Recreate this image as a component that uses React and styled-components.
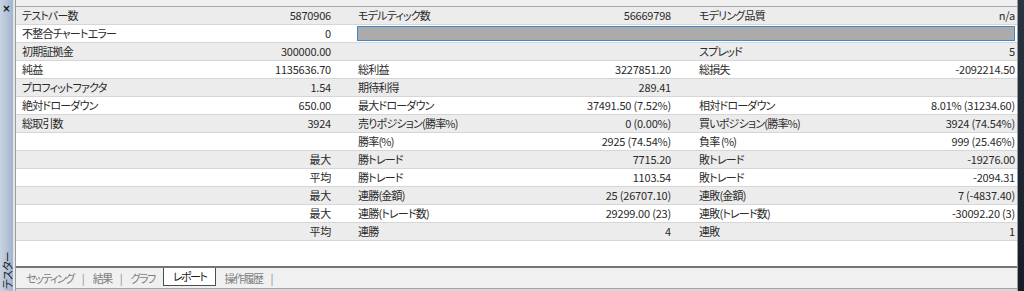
import React from 'react';
import styled, { createGlobalStyle } from 'styled-components';

const GlobalStyle = createGlobalStyle`
  html, body {
    margin: 0;
    padding: 0;
    background: #f0f0f0;
  }
  body {
    width: 1024px;
    height: 291px;
    overflow: hidden;
    font-family: "Noto Sans CJK JP", "Noto Sans", sans-serif;
    font-feature-settings: "palt";
    color: #2a2a2a;
  }
`;

const Window = styled.div`
  display: flex;
  width: 1024px;
  height: 291px;
`;

const SideStrip = styled.div`
  width: 13px;
  box-sizing: border-box;
  padding: 4px 0 2px;
  display: flex;
  flex-direction: column;
  justify-content: space-between;
  align-items: center;
  background: linear-gradient(to right, #c8d3e3, #a2b5cf);
`;

const CloseMark = styled.span`
  font-family: "DejaVu Sans", sans-serif;
  font-size: 10px;
  font-weight: bold;
  line-height: 1;
  color: #111;
`;

const SideTitle = styled.span`
  writing-mode: vertical-rl;
  text-orientation: sideways;
  transform: rotate(180deg);
  font-size: 11px;
  line-height: 12px;
  letter-spacing: -0.8px;
  color: #1e1e1e;
`;

const Gutter = styled.div`
  width: 2px;
  background: #e6e6e6;
`;

const Main = styled.div`
  width: 1001px;
  display: flex;
  flex-direction: column;
  background: #fff;
  border-left: 1px solid #9c9c9c;
  border-right: 1px solid #9c9c9c;
`;

const TopBand = styled.div`
  height: 6px;
  background: #f0f0f0;
  border-bottom: 1px solid #a9a9a9;
`;

const Table = styled.div`
  display: flex;
  flex-direction: column;
`;

const Row = styled.div`
  display: flex;
  height: 17px;
  border-bottom: 1px solid #d6d6d6;
  background: ${p => (p.$shade ? '#ececec' : '#ffffff')};
`;

const Cell = styled.div`
  width: ${p => p.$w}px;
  box-sizing: border-box;
  padding: 0 ${p => p.$pr}px 0 ${p => p.$pl}px;
  display: flex;
  align-items: center;
  justify-content: space-between;
  font-size: 11px;
  line-height: 17px;
  white-space: nowrap;
`;

const Label = styled.span`
  letter-spacing: -0.8px;
`;

const Value = styled.span`
  margin-left: auto;
  letter-spacing: -0.2px;
`;

const ProgressBar = styled.div`
  flex: 1;
  height: 13px;
  margin: 1px 2px 0 22px;
  border: 1px solid #4388c6;
  background: #ababab;
`;

const Spacer = styled.div`
  flex: 1;
  background: #fff;
`;

const TabBar = styled.div`
  height: 20px;
  display: flex;
  align-items: flex-start;
  gap: 8px;
  padding-left: 10px;
  background: #f0f0f0;
  border-top: 2px solid #747474;
  border-bottom: 1px solid #a3a3a3;
  font-size: 11px;
`;

const Tab = styled.span`
  height: ${p => (p.$active ? '17px' : '20px')};
  line-height: ${p => (p.$active ? '17px' : '20px')};
  padding: 0 ${p => (p.$active ? '9px' : '0')};
  letter-spacing: -1.5px;
  color: ${p => (p.$active ? '#1a1a1a' : '#7d7d7d')};
  background: ${p => (p.$active ? '#ffffff' : 'transparent')};
  border: ${p => (p.$active ? '1px solid #4d4d4d' : 'none')};
  border-top: none;
`;

const Sep = styled.span`
  line-height: 20px;
  color: #8a8a8a;
`;

const BottomEdge = styled.div`
  height: 2px;
  background: #d9d9d9;
`;

const DarkEdge = styled.div`
  width: 6px;
  background: linear-gradient(to bottom, #2a3442, #151c26);
`;

const groups = [
  { w: 319, pl: 6, pr: 4 },
  { w: 340, pl: 23, pr: 4 },
  { w: 342, pl: 24, pr: 2 },
];

const rows = [
  [['テストバー数', '5870906'], ['モデルティック数', '56669798'], ['モデリング品質', 'n/a']],
  [['不整合チャートエラー', '0'], 'bar'],
  [['初期証拠金', '300000.00'], ['', ''], ['スプレッド', '5']],
  [['純益', '1135636.70'], ['総利益', '3227851.20'], ['総損失', '-2092214.50']],
  [['プロフィットファクタ', '1.54'], ['期待利得', '289.41'], ['', '']],
  [['絶対ドローダウン', '650.00'], ['最大ドローダウン', '37491.50 (7.52%)'], ['相対ドローダウン', '8.01% (31234.60)']],
  [['総取引数', '3924'], ['売りポジション(勝率%)', '0 (0.00%)'], ['買いポジション(勝率%)', '3924 (74.54%)']],
  [['', ''], ['勝率(%)', '2925 (74.54%)'], ['負率 (%)', '999 (25.46%)']],
  [['', '最大'], ['勝トレード', '7715.20'], ['敗トレード', '-19276.00']],
  [['', '平均'], ['勝トレード', '1103.54'], ['敗トレード', '-2094.31']],
  [['', '最大'], ['連勝(金額)', '25 (26707.10)'], ['連敗(金額)', '7 (-4837.40)']],
  [['', '最大'], ['連勝(トレード数)', '29299.00 (23)'], ['連敗(トレード数)', '-30092.20 (3)']],
  [['', '平均'], ['連勝', '4'], ['連敗', '1']],
];

function ReportRow({ cells, shade }) {
  return (
    <Row $shade={shade}>
      {cells.map((c, i) =>
        c === 'bar' ? (
          <ProgressBar key={i} />
        ) : (
          <Cell key={i} $w={groups[i].w} $pl={groups[i].pl} $pr={groups[i].pr}>
            <Label>{c[0]}</Label>
            <Value>{c[1]}</Value>
          </Cell>
        )
      )}
    </Row>
  );
}

export default function App() {
  return (
    <>
      <GlobalStyle />
      <Window>
        <SideStrip>
          <CloseMark>×</CloseMark>
          <SideTitle>テスター</SideTitle>
        </SideStrip>
        <Gutter />
        <Main>
          <TopBand />
          <Table>
            {rows.map((r, i) => (
              <ReportRow key={i} cells={r} shade={i % 2 === 0} />
            ))}
          </Table>
          <Spacer />
          <TabBar>
            <Tab>セッティング</Tab>
            <Sep>|</Sep>
            <Tab>結果</Tab>
            <Sep>|</Sep>
            <Tab>グラフ</Tab>
            <Tab $active>レポート</Tab>
            <Tab>操作履歴</Tab>
            <Sep>|</Sep>
          </TabBar>
          <BottomEdge />
        </Main>
        <DarkEdge />
      </Window>
    </>
  );
}
